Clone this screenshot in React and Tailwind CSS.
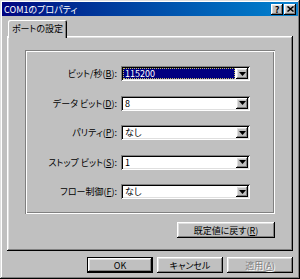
import { useState } from 'react';

const raised =
  'shadow-[inset_-1px_-1px_#000,inset_1px_1px_#fff,inset_-2px_-2px_#808080,inset_2px_2px_#dfdfdf]';
const sunken =
  'shadow-[inset_1px_1px_#808080,inset_-1px_-1px_#fff,inset_2px_2px_#000,inset_-2px_-2px_#dfdfdf]';
const etched =
  'shadow-[inset_1px_1px_#808080,inset_2px_2px_#fff,inset_-1px_-1px_#fff,inset_-2px_-2px_#808080]';

const rows = [
  { label: 'ビット/秒', key: 'B', value: '115200', focused: true },
  { label: 'データ ビット', key: 'D', value: '8' },
  { label: 'パリティ', key: 'P', value: 'なし' },
  { label: 'ストップ ビット', key: 'S', value: '1' },
  { label: 'フロー制御', key: 'F', value: 'なし' },
];

function Arrow() {
  return (
    <svg width="7" height="4" viewBox="0 0 7 4" className="block">
      <path d="M0 0h7L3.5 4z" fill="#000" />
    </svg>
  );
}

function Combo({ value, focused }) {
  return (
    <div className={`flex h-[15px] w-[129px] bg-white p-[2px] ${sunken}`}>
      <div className="flex min-w-0 flex-1 items-center pr-[1px]">
        {focused ? (
          <div className="flex h-full w-full items-center border border-dotted border-[#c8c060] bg-[#000080] pl-[1px] text-white">
            {value}
          </div>
        ) : (
          <span className="pl-[2px]">{value}</span>
        )}
      </div>
      <div className={`flex w-[12px] items-center justify-center bg-[#c0c0c0] ${raised}`}>
        <Arrow />
      </div>
    </div>
  );
}

function Button({ children, width, isDefault, disabled }) {
  const face = (
    <div
      className={`flex h-full w-full items-center justify-center bg-[#c0c0c0] ${raised} ${
        disabled ? 'text-[#808080] [text-shadow:1px_1px_0_#fff]' : ''
      }`}
    >
      {children}
    </div>
  );
  return (
    <div className={`h-[16px] ${width} ${isDefault ? 'border border-black' : ''}`}>{face}</div>
  );
}

export default function App() {
  const [tab] = useState('port');

  return (
    <div className="flex h-[279px] w-[300px] flex-col bg-[#c0c0c0] p-[2px] font-['Noto_Sans_CJK_JP','Liberation_Sans',sans-serif] text-[9px] leading-none text-black [font-feature-settings:'palt'] shadow-[inset_-1px_-1px_#000,inset_1px_1px_#dfdfdf,inset_-2px_-2px_#808080,inset_2px_2px_#fff]">
      {/* title bar */}
      <div className="flex h-[14px] items-center justify-between bg-gradient-to-r from-[#000080] to-[#1084d0] pl-[2px] pr-[2px]">
        <span className="text-white">COM1のプロパティ</span>
        <div className="flex gap-[1px]">
          <div className={`flex h-[11px] w-[12px] items-center justify-center bg-[#c0c0c0] text-[9px] font-bold ${raised}`}>
            ?
          </div>
          <div className={`flex h-[11px] w-[12px] items-center justify-center bg-[#c0c0c0] ${raised}`}>
            <svg width="7" height="6" viewBox="0 0 7 6">
              <path d="M0.5 0.5l6 5M6.5 0.5l-6 5" stroke="#000" strokeWidth="1.5" />
            </svg>
          </div>
        </div>
      </div>

      <div className="mt-[4px] flex flex-col px-[5px]">
        {/* tabs */}
        <div className="flex h-[16px] pl-[1px]">
          {tab === 'port' && (
            <div className="relative z-10 -mb-[2px] flex h-[18px] w-[59px] items-start justify-center rounded-t-[2px] bg-[#c0c0c0] pt-[4px] shadow-[inset_1px_1px_#fff,inset_-1px_0_#000,inset_-2px_0_#808080]">
              ポートの設定
            </div>
          )}
        </div>

        {/* panel */}
        <div className={`flex h-[215px] flex-col px-[18px] pt-[14px] ${raised}`}>
          <div className={`flex h-[164px] flex-col gap-[14.5px] pt-[16px] ${etched}`}>
            {rows.map((r) => (
              <div key={r.key} className="flex items-center">
                <span className="w-[92px] text-right">
                  {r.label}(<u>{r.key}</u>):
                </span>
                <div className="ml-[4px]">
                  <Combo value={r.value} focused={r.focused} />
                </div>
              </div>
            ))}
          </div>
          <div className="mt-[8px] flex justify-end">
            <Button width="w-[98px]">
              既定値に戻す(<u>R</u>)
            </Button>
          </div>
        </div>

        {/* dialog buttons */}
        <div className="mt-[6px] flex justify-end gap-[4px]">
          <Button width="w-[66px]" isDefault>
            OK
          </Button>
          <Button width="w-[66px]">キャンセル</Button>
          <Button width="w-[66px]" disabled>
            適用(<u>A</u>)
          </Button>
        </div>
      </div>
    </div>
  );
}
